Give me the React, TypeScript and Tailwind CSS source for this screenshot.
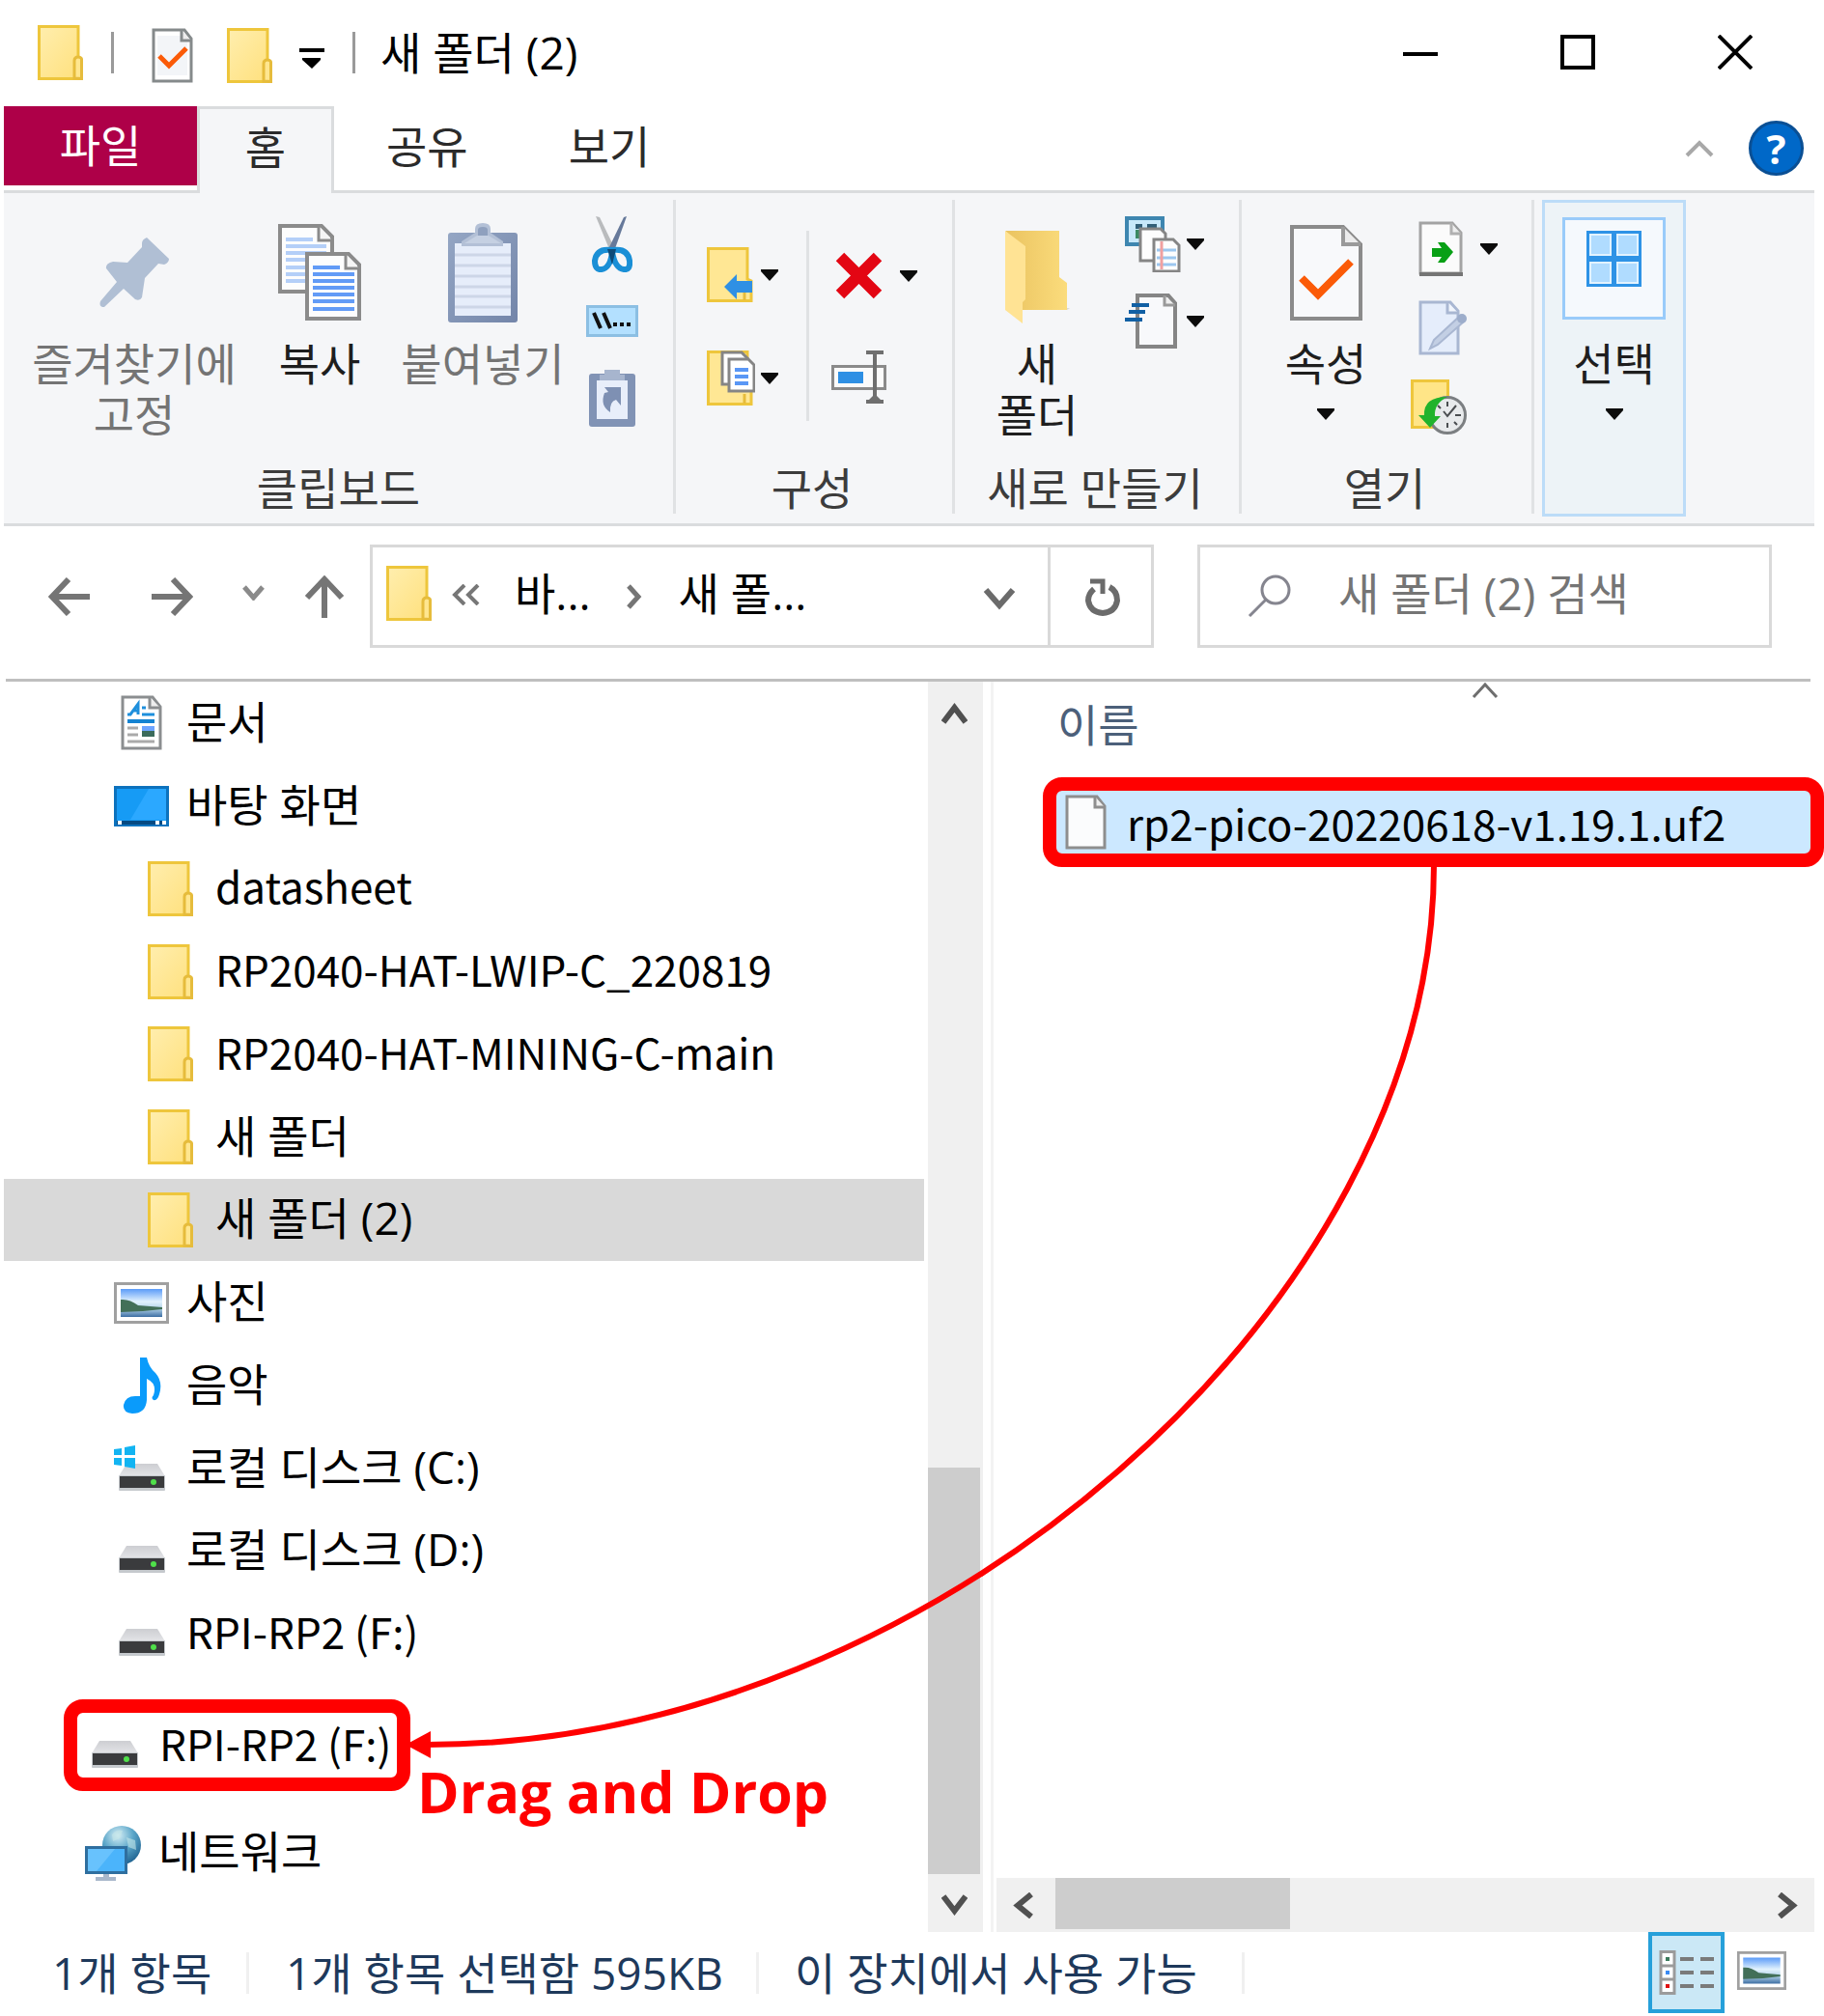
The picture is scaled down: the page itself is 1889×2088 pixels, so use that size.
import React from "react";

type IconProps = { className?: string };

/* ---------- icons ---------- */

const Folder = ({ className = "w-[47px] h-[57px]" }: IconProps) => (
  <svg viewBox="0 0 47 57" className={className} aria-hidden="true">
    <defs>
      <linearGradient id="fold" x1="0" y1="0" x2="1" y2="1">
        <stop offset="0" stopColor="#ffeeae" />
        <stop offset="1" stopColor="#ffe07c" />
      </linearGradient>
    </defs>
    <path d="M1.5 1.5H42V33l3.5 3V55.5H1.5Z" fill="url(#fold)" stroke="#eec63c" strokeWidth="3" />
    <path d="M38 55V37q0-4 4-4t3.5 4V55.5Z" fill="#ffe68f" stroke="#e6bc3c" strokeWidth="3" />
  </svg>
);

const Triangle = () => (
  <svg viewBox="0 0 18 12" className="h-3 w-[18px]" aria-hidden="true">
    <path d="M0 0H18V2L9 12 0 2Z" fill="#0c0c0c" />
  </svg>
);

const CheckDoc = ({ className = "" }: IconProps) => (
  <svg viewBox="0 0 75 99" className={className} aria-hidden="true">
    <path d="M2 2H55L73 20V97H2Z" fill="#f8f9fb" stroke="#8b8b8b" strokeWidth="4" />
    <path d="M55 2V20H73" fill="#ececec" stroke="#9a9a9a" strokeWidth="4" />
    <path d="M12 55 29 72 63 38" fill="none" stroke="#fb5b08" strokeWidth="8" />
  </svg>
);

const CheckDocSmall = () => (
  <svg viewBox="0 0 43 57" className="h-[57px] w-[43px]" aria-hidden="true">
    <path d="M2 2H34L41 11V55H2Z" fill="#fff" stroke="#858a8b" strokeWidth="3" />
    <path d="M6 8H30V15H37V49H6Z" fill="#f3f5f8" />
    <path d="M31 2V13H41" fill="#ececec" stroke="#858a8b" strokeWidth="3" />
    <path d="M8 29 18 39 36 21" fill="none" stroke="#fb5b08" strokeWidth="5" />
  </svg>
);

const Pin = () => (
  <svg viewBox="0 0 72 72" className="size-[72px]" aria-hidden="true">
    <path
      d="M49 0q-5 2-5 6v4L29 26 14 25q-8 2-7 7l11 14L1 66q-2 6 4 6L25 53l12 11q5 2 7-2l3-20L61 27l6 1q5-2 5-6Z"
      fill="#b0bfd4"
    />
  </svg>
);

const CopyPages = () => (
  <svg viewBox="0 0 86 100" className="h-[100px] w-[86px]" aria-hidden="true">
    <path d="M2 2H45L56 13V70H2Z" fill="#fdfdfd" stroke="#8b8b8b" strokeWidth="4" />
    <path d="M42 2V17H56" fill="#f5f5f5" stroke="#8b8b8b" strokeWidth="3" />
    <path d="M8 16H36M8 23H50M8 30H50M8 37H50M8 45H50M8 52H50M8 59H50" stroke="#b4cff8" strokeWidth="4" />
    <path d="M30 31H73L84 42V98H30Z" fill="#fdfdfd" stroke="#8b8b8b" strokeWidth="4" />
    <path d="M70 31V46H84" fill="#f5f5f5" stroke="#8b8b8b" strokeWidth="3" />
    <path d="M36 45H64M36 52H79M36 59H79M36 66H79M36 73H79M36 80H79M36 88H79" stroke="#629bf6" strokeWidth="4" />
  </svg>
);

const Clipboard = () => (
  <svg viewBox="0 0 72 104" className="h-[104px] w-[72px]" aria-hidden="true">
    <defs>
      <linearGradient id="clip" x1="0" y1="0" x2="1" y2="1">
        <stop offset="0" stopColor="#94a6c4" />
        <stop offset="1" stopColor="#7385a9" />
      </linearGradient>
    </defs>
    <rect x="0" y="11" width="72" height="93" rx="3" fill="url(#clip)" />
    <rect x="7" y="22" width="58" height="75" fill="#e6edfa" />
    <path d="M7 34H65M7 45H65M7 56H65M7 67H65M7 77H65M7 88H65" stroke="#cdd6e7" strokeWidth="3" />
    <path d="M28 11V7q0-6 8-6t8 6v4l13 9v5H14v-5Z" fill="#b3c0d6" />
    <path d="M31 14V8q0-3 5-3t5 3v6Z" fill="#8fa0be" />
    <path d="M17 22 30 14H42L55 22Z" fill="#c5d0e2" />
  </svg>
);

const Scissors = () => (
  <svg viewBox="0 0 42 58" className="h-[58px] w-[42px]" aria-hidden="true">
    <path d="M4 0 8 1 24 34l-4 5Z" fill="#b9bbbd" />
    <path d="M36 0 33 1 17 34l5 5Z" fill="#66799a" />
    <path d="M20 35Q5 33 3 46q0 10 7 9 9-1 11-18Q24 54 33 55q7 1 6-9Q37 33 22 35Z" fill="none" stroke="#1a8fd6" strokeWidth="6" />
    <path d="M16 34h9l-4 16Z" fill="#0d4a78" />
  </svg>
);

const CopyPath = () => (
  <svg viewBox="0 0 54 33" className="h-[33px] w-[54px]" aria-hidden="true">
    <rect x="1.5" y="1.5" width="51" height="30" fill="#b3e0ff" stroke="#8cbfe3" strokeWidth="3" />
    <path d="M8 8 15 24M18 8 25 24" stroke="#111" strokeWidth="4" />
    <path d="M28 20h4M35 20h4M42 20h4" stroke="#111" strokeWidth="4" />
  </svg>
);

const PasteShortcut = () => (
  <svg viewBox="0 0 48 59" className="h-[59px] w-[48px]" aria-hidden="true">
    <rect x="0" y="4" width="48" height="55" rx="3" fill="#8193b5" />
    <rect x="8" y="11" width="32" height="40" fill="#e8eefa" />
    <path d="M16 0H32V5H37V11H11V5H16Z" fill="#a7b5ce" />
    <path d="M16 18H33V37L28 31q-7 2-6 13-11-7-6-20l4-1Z" fill="#7e90b3" />
  </svg>
);

const MoveTo = () => (
  <svg viewBox="0 0 50 57" className="h-[57px] w-[50px]" aria-hidden="true">
    <path d="M1.5 1.5H42V33l4 2V55.5H1.5Z" fill="#ffe794" stroke="#eec63c" strokeWidth="3" />
    <path d="M39 45V55" stroke="#e6bc3c" strokeWidth="3" />
    <path d="M18 41 31 28v7H47V47H31v7Z" fill="#2f90e4" />
  </svg>
);

const CopyTo = () => (
  <svg viewBox="0 0 50 57" className="h-[57px] w-[50px]" aria-hidden="true">
    <path d="M1.5 1.5H42V33l4 2V55.5H1.5Z" fill="#ffe794" stroke="#eec63c" strokeWidth="3" />
    <path d="M39 45V55" stroke="#e6bc3c" strokeWidth="3" />
    <path d="M16 2H36L42 8V35H16Z" fill="#fff" stroke="#858585" strokeWidth="3" />
    <path d="M23 9H43L49 15V42H23Z" fill="#fff" stroke="#858585" strokeWidth="3" />
    <path d="M29 20H43M29 27H43M29 34H43" stroke="#5a97f5" strokeWidth="4" />
  </svg>
);

const DeleteX = () => (
  <svg viewBox="0 0 49 49" className="size-[49px]" aria-hidden="true">
    <path d="M5 5 44 44M44 5 5 44" stroke="#e30613" strokeWidth="12" />
  </svg>
);

const Rename = () => (
  <svg viewBox="0 0 57 55" className="h-[55px] w-[57px]" aria-hidden="true">
    <rect x="1.5" y="16.5" width="54" height="23" fill="#fbfbfb" stroke="#8a8a8a" strokeWidth="3" />
    <rect x="7" y="22" width="26" height="12" fill="#2f90e4" />
    <path d="M36 2H54M36 53H54M45 2V53" stroke="#6f6f6f" strokeWidth="4" fill="none" />
    <path d="M38 52 45 45 52 52Z" fill="#6f6f6f" />
  </svg>
);

const BigFolder = () => (
  <svg viewBox="0 0 68 97" className="mt-[10px] h-[97px] w-[68px]" aria-hidden="true">
    <defs>
      <linearGradient id="bigf" x1="0" y1="0" x2="1" y2="0">
        <stop offset="0" stopColor="#eac360" />
        <stop offset="1" stopColor="#fbdc7c" />
      </linearGradient>
    </defs>
    <path d="M1 0H57V48L65 54V82H19V18Z" fill="url(#bigf)" />
    <path d="M1 0 22 16V71L19 74V96L1 82Z" fill="#ffe394" />
    <path d="M65 80h3l-3 2Z" fill="#d8d8d8" />
  </svg>
);

const NewItem = () => (
  <svg viewBox="0 0 58 58" className="size-[58px]" aria-hidden="true">
    <rect x="2" y="2" width="37" height="27" fill="#c7e8fa" stroke="#3e86b0" strokeWidth="4" />
    <path d="M11 8h7v5h-7zM23 8h10v4H23z" fill="#315f78" />
    <path d="M11 14h5v9h-5z" fill="#3c8a63" />
    <path d="M16 13H37L42 18V46H16Z" fill="#fdfdfd" stroke="#858585" strokeWidth="3" />
    <path d="M30 24H50L56 30V57H30Z" fill="#fdfdfd" stroke="#858585" strokeWidth="3" />
    <path d="M33 35H53M33 43H53M33 50H53" stroke="#9cc7ef" strokeWidth="3" />
    <path d="M38 26V55" stroke="#f0a0a0" strokeWidth="3" />
  </svg>
);

const EasyAccess = () => (
  <svg viewBox="0 0 58 57" className="h-[57px] w-[58px]" aria-hidden="true">
    <path d="M13 2H45L52 10V55H13Z" fill="#f8f9fb" stroke="#858585" strokeWidth="4" />
    <path d="M41 2V12H52" fill="#eee" stroke="#999" strokeWidth="3" />
    <path d="M7 12H25M4 19H21M0 27H18" stroke="#1160a4" strokeWidth="4" />
  </svg>
);

const OpenDoc = () => (
  <svg viewBox="0 0 46 57" className="h-[57px] w-[46px]" aria-hidden="true">
    <path d="M2 2H35L44 12V54H2Z" fill="#fbfbfb" stroke="#a3a3a3" strokeWidth="3" />
    <path d="M1 55H46" stroke="#757575" strokeWidth="4" />
    <path d="M34 2V13H44" fill="#eee" stroke="#b0b0b0" strokeWidth="3" />
    <path d="M14 28H24L20 22H27L36 32 27 43H20L24 37H14Z" fill="#08a015" />
  </svg>
);

const EditDoc = () => (
  <svg viewBox="0 0 50 57" className="h-[57px] w-[50px]" aria-hidden="true">
    <path d="M2 2H33L41 11V55H2Z" fill="#e5edfb" stroke="#a9b7d2" strokeWidth="3" />
    <path d="M30 2V13H41" fill="#f1f5fc" stroke="#a9b7d2" strokeWidth="3" />
    <path d="M12 50 16 41 41 18 46 23 20 46Z" fill="#c3cfe4" stroke="#a9b7d2" strokeWidth="2" />
    <circle cx="45" cy="19" r="5" fill="#9dadcb" />
  </svg>
);

const History = () => (
  <svg viewBox="0 0 58 57" className="h-[57px] w-[58px]" aria-hidden="true">
    <rect x="1.5" y="1.5" width="37" height="48" fill="#ffe587" stroke="#eec63c" strokeWidth="3" />
    <circle cx="38" cy="37" r="18.5" fill="#e8eaec" stroke="#7c7f82" strokeWidth="3" />
    <path d="M38 23V28M38 45V50M46 37H52M28 27 31 30M45 44 48 47M47 27 38 38 34 33" stroke="#4a4d50" strokeWidth="2" fill="none" />
    <path d="M38 18Q13 18 14 37H8L20 50 31 38H25Q24 25 38 18Z" fill="#21b32c" />
  </svg>
);

const SelectGrid = () => (
  <svg viewBox="0 0 57 58" className="h-[58px] w-[57px]" aria-hidden="true">
    <rect width="57" height="58" fill="#2e93e6" />
    <path d="M4 4H25V25H4ZM32 4H53V25H32ZM4 33H25V54H4ZM32 33H53V54H32Z" fill="#b0dcff" stroke="#e2f3ff" strokeWidth="2" />
  </svg>
);

const DocumentIcon = () => (
  <svg viewBox="0 0 43 57" className="h-[57px] w-[43px]" aria-hidden="true">
    <path d="M2 2H33L41 12V55H2Z" fill="#fff" stroke="#8b8e90" strokeWidth="3" />
    <path d="M30 2V13H41" fill="#eee" stroke="#8b8e90" strokeWidth="3" />
    <path d="M7 20H10L18 9V20M12 16H18M22 13H26M22 20H35" stroke="#1e8fdc" strokeWidth="3" fill="none" />
    <path d="M7 27H35" stroke="#1583d2" strokeWidth="4" />
    <path d="M7 34H18M7 41H18M7 48H35" stroke="#aaa" strokeWidth="3" />
    <path d="M22 32H35V37H22Z" fill="#6ea4ff" />
    <path d="M22 37H35V43H22Z" fill="#3b6b5b" />
  </svg>
);

const DesktopIcon = () => (
  <svg viewBox="0 0 57 42" className="h-[42px] w-[57px]" aria-hidden="true">
    <rect x="1.5" y="1.5" width="54" height="39" fill="#169bf5" stroke="#0c72bd" strokeWidth="3" />
    <path d="M36 3H54V35H17Z" fill="#2ba8ff" />
    <path d="M3 38H54" stroke="#064a82" strokeWidth="4" />
    <path d="M4 38h4M43 38h4M50 38h4" stroke="#fff" strokeWidth="4" />
  </svg>
);

const PictureIcon = ({ className = "w-[57px] h-[43px]" }: IconProps) => (
  <svg viewBox="0 0 57 43" preserveAspectRatio="none" className={className} aria-hidden="true">
    <defs>
      <linearGradient id="sky" x1="0" y1="0" x2="0" y2="1">
        <stop offset="0" stopColor="#5b9bf8" />
        <stop offset=".45" stopColor="#e2f2fd" />
        <stop offset=".7" stopColor="#b3d3e9" />
        <stop offset="1" stopColor="#3d6ea3" />
      </linearGradient>
    </defs>
    <rect x="1.5" y="1.5" width="54" height="40" fill="#fff" stroke="#a0a0a0" strokeWidth="3" />
    <rect x="7" y="7" width="43" height="29" fill="url(#sky)" />
    <path d="M7 18Q16 17 25 24L50 26V28L30 30 7 31Z" fill="#426f58" />
  </svg>
);

const MusicIcon = () => (
  <svg viewBox="0 0 40 58" className="h-[58px] w-[40px]" aria-hidden="true">
    <path
      d="M18 0H25Q27 10 34 16 42 25 38 38 36 45 32 44 29 42 32 39 36 27 25 22V44Q24 58 10 58 0 57 1 49 3 40 13 40H18Z"
      fill="#0a9bfb"
    />
  </svg>
);

const Drive = ({ windows = false }: { windows?: boolean }) => (
  <svg viewBox="0 0 57 48" className="h-[48px] w-[57px] shrink-0" aria-hidden="true">
    <defs>
      <linearGradient id="drv" x1="0" y1="0" x2="0" y2="1">
        <stop offset="0" stopColor="#cdced2" />
        <stop offset="1" stopColor="#e3e4e7" />
      </linearGradient>
    </defs>
    <path d="M13 19H45L53 32H5Z" fill="url(#drv)" />
    <rect x="5" y="31" width="48" height="16" rx="1" fill="#c5c9cd" />
    <rect x="6" y="32" width="46" height="12" fill="#3a3b3d" />
    <circle cx="41" cy="38" r="3" fill="#4fe04a" />
    {windows && (
      <path d="M0 4 8 3V10H0ZM11 2 22 0V10H11ZM0 13H8V21L0 20ZM11 13H22V24L11 22Z" fill="#12b4f2" />
    )}
  </svg>
);

const NetworkIcon = () => (
  <svg viewBox="0 0 58 57" className="h-[57px] w-[58px]" aria-hidden="true">
    <defs>
      <radialGradient id="globe" cx=".4" cy=".25" r=".8">
        <stop offset="0" stopColor="#d5eef5" />
        <stop offset=".5" stopColor="#5ba6c9" />
        <stop offset="1" stopColor="#1c5f8e" />
      </radialGradient>
    </defs>
    <circle cx="38" cy="20" r="20" fill="url(#globe)" />
    <path d="M28 9Q33 3 39 5L36 13 29 16ZM43 12 52 15 53 25 45 22Z" fill="#c4e6e8" opacity=".6" />
    <rect x="1.5" y="22.5" width="41" height="26" fill="#4bb4fb" stroke="#2f6f9f" strokeWidth="3" />
    <path d="M3 24H31L12 47H3Z" fill="#7cccff" opacity=".6" />
    <path d="M19 50H25V53H32V57H11V53H19Z" fill="#a9b8cb" />
  </svg>
);

const FileIcon = () => (
  <svg viewBox="0 0 43 57" className="h-[57px] w-[43px]" aria-hidden="true">
    <path d="M2 2H33L41 12V55H2Z" fill="#fbfcfd" stroke="#8e8e8e" strokeWidth="3" />
    <path d="M31 2V13H41" fill="#eee" stroke="#8e8e8e" strokeWidth="3" />
  </svg>
);

const Chevron = ({ d, className, color = "#505050", width = 6, box }: { d: string; className: string; color?: string; width?: number; box: string }) => (
  <svg viewBox={box} className={className} aria-hidden="true">
    <path d={d} fill="none" stroke={color} strokeWidth={width} />
  </svg>
);

/* ---------- ribbon ---------- */

const Group = ({ label, className, children }: { label: string; className: string; children: React.ReactNode }) => (
  <section className={"flex h-[325px] shrink-0 flex-col justify-between border-r-[3px] border-[#e0e2e4] " + className}>
    <div className="flex">{children}</div>
    <h2 className="text-center leading-[53px] text-[#3c3c3c]">{label}</h2>
  </section>
);

const BigButton = ({ icon, text, className = "", arrow }: { icon: React.ReactNode; text: string; className?: string; arrow?: boolean }) => (
  <button type="button" className={"flex flex-col items-center pt-[23px] " + className}>
    <span className="mb-[16px] flex h-[104px] items-center">{icon}</span>
    <span className="whitespace-pre text-center leading-[53px]">{text}</span>
    {arrow && (
      <span className="mt-[20px]">
        <Triangle />
      </span>
    )}
  </button>
);

const SmallButton = ({ icon, label, arrow }: { icon: React.ReactNode; label: string; arrow?: boolean }) => (
  <button type="button" aria-label={label} className="flex items-center gap-[6px]">
    {icon}
    {arrow && <Triangle />}
  </button>
);

const Ribbon = () => (
  <div className="mr-[10px] ml-1 flex border-b-[3px] border-[#dadcde] bg-[#f5f6f8] py-[7px] text-[#1e1e1e]">
    <Group label="클립보드" className="w-[696px]">
      <BigButton icon={<Pin />} text={"즐겨찾기에\n고정"} className="ml-[24px] w-[222px] text-[#747474]" />
      <BigButton icon={<CopyPages />} text="복사" className="ml-[34px] w-[94px]" />
      <BigButton icon={<Clipboard />} text="붙여넣기" className="ml-[32px] w-[180px] text-[#747474]" />
      <div className="ml-[15px] flex w-[58px] flex-col items-center gap-[34px] pt-[17px]">
        <SmallButton icon={<Scissors />} label="잘라내기" />
        <SmallButton icon={<CopyPath />} label="경로 복사" />
        <SmallButton icon={<PasteShortcut />} label="바로 가기 붙여넣기" />
      </div>
    </Group>
    <Group label="구성" className="w-[289px] pr-1">
      <div className="mt-[32px] flex h-[197px] w-[138px] flex-col gap-[50px] border-r-[3px] border-[#e0e2e4] pt-[17px] pl-[32px]">
        <SmallButton icon={<MoveTo />} label="이동 위치" arrow />
        <SmallButton icon={<CopyTo />} label="복사 위치" arrow />
      </div>
      <div className="flex flex-col gap-[53px] pt-[54px] pl-[23px]">
        <button type="button" aria-label="삭제" className="flex items-center gap-[18px] pl-[4px]">
          <DeleteX />
          <Triangle />
        </button>
        <SmallButton icon={<Rename />} label="이름 바꾸기" />
      </div>
    </Group>
    <Group label="새로 만들기" className="w-[297px] pr-1">
      <BigButton icon={<BigFolder />} text={"새\n폴더"} className="ml-[38px] w-[94px]" />
      <div className="ml-[44px] flex flex-col gap-[22px] pt-[17px]">
        <SmallButton icon={<NewItem />} label="새 항목" arrow />
        <SmallButton icon={<EasyAccess />} label="빠른 연결" arrow />
      </div>
    </Group>
    <Group label="열기" className="w-[303px] pr-1">
      <BigButton icon={<CheckDoc className="h-[99px] w-[75px]" />} text="속성" arrow className="ml-[40px] w-[94px]" />
      <div className="ml-[41px] flex flex-col gap-[25px] pt-[22px] pl-[8px]">
        <button type="button" aria-label="열기" className="flex items-center gap-[18px]">
          <OpenDoc />
          <Triangle />
        </button>
        <SmallButton icon={<EditDoc />} label="편집" />
        <span className="-ml-2">
          <SmallButton icon={<History />} label="히스토리" />
        </span>
      </div>
    </Group>
    <button
      type="button"
      className="ml-[8px] flex h-[328px] w-[149px] flex-col items-center border-[3px] border-[#bcdcf8] bg-[#edf3f7] pt-[15px]"
    >
      <span className="flex h-[106px] w-[107px] justify-center border-[3px] border-[#99cbfa] bg-[#f5f9fd] pt-[11px]">
        <SelectGrid />
      </span>
      <span className="mt-[19px] leading-[53px]">선택</span>
      <span className="mt-[20px]">
        <Triangle />
      </span>
    </button>
  </div>
);

/* ---------- folder tree ---------- */

const tree: { label: string; icon: React.ReactNode; deep?: boolean; selected?: boolean; latin?: boolean }[] = [
  { label: "문서", icon: <DocumentIcon /> },
  { label: "바탕 화면", icon: <DesktopIcon /> },
  { label: "datasheet", icon: <Folder />, deep: true, latin: true },
  { label: "RP2040-HAT-LWIP-C_220819", icon: <Folder />, deep: true, latin: true },
  { label: "RP2040-HAT-MINING-C-main", icon: <Folder />, deep: true, latin: true },
  { label: "새 폴더", icon: <Folder />, deep: true },
  { label: "새 폴더 (2)", icon: <Folder />, deep: true, selected: true },
  { label: "사진", icon: <PictureIcon /> },
  { label: "음악", icon: <MusicIcon /> },
  { label: "로컬 디스크 (C:)", icon: <Drive windows /> },
  { label: "로컬 디스크 (D:)", icon: <Drive /> },
  { label: "RPI-RP2 (F:)", icon: <Drive />, latin: true },
];

const latinText = "pb-[6px] font-['Noto_Sans_CJK_KR',sans-serif] text-[44px]";

const Tree = () => (
  <nav className="w-[953px] shrink-0 text-black" aria-label="탐색 창">
    <ul className="grid h-[1029px] auto-rows-fr">
      {tree.map((n) => (
        <li key={n.label} className={n.selected ? "bg-[#d9d9d9]" : ""}>
          <button type="button" className={"flex size-full items-center gap-[18px] " + (n.deep ? "pl-[144px]" : "pl-[114px]")}>
            <span className="flex w-[57px] shrink-0 justify-center">{n.icon}</span>
            <span className={"whitespace-nowrap leading-[60px] " + (n.latin ? latinText : "pb-[4px]")}>{n.label}</span>
          </button>
        </li>
      ))}
    </ul>
    <button
      type="button"
      className="mt-[25px] ml-[62px] flex h-[95px] w-[359px] items-center gap-[18px] rounded-[20px] border-[14px] border-[#ff0000] pl-[10px]"
    >
      <Drive />
      <span className={"whitespace-nowrap leading-[60px] " + latinText}>RPI-RP2 (F:)</span>
    </button>
    <button type="button" className="mt-[20px] ml-[84px] flex h-[88px] items-center gap-[18px]">
      <NetworkIcon />
      <span className="pb-[4px] leading-[60px]">네트워크</span>
    </button>
  </nav>
);

/* ---------- window ---------- */

const Divider = () => <span className="h-[43px] w-[3px] shrink-0 bg-[#9a9a9a]" />;

export default function App() {
  return (
    <div className="w-full overflow-hidden bg-white font-['Open_Sans','Noto_Sans_CJK_KR',sans-serif] text-[46px] leading-[60px] text-black">
      <header className="flex h-[110px] items-center pb-[2px] pl-[39px]">
        <Folder />
        <span className="ml-[29px] flex">
          <Divider />
        </span>
        <button type="button" aria-label="속성" className="ml-[39px] pt-[6px]">
          <CheckDocSmall />
        </button>
        <button type="button" aria-label="새 폴더" className="ml-[35px] pt-[6px]">
          <Folder />
        </button>
        <button type="button" aria-label="빠른 실행 도구 모음 사용자 지정" className="mr-[29px] ml-[28px] pt-[12px]">
          <svg viewBox="0 0 26 21" className="h-[21px] w-[26px]" aria-hidden="true">
            <path d="M0 0H26V4H0ZM3 10H22V12L13 21 3 12Z" fill="#000" />
          </svg>
        </button>
        <Divider />
        <h1 className="ml-[26px] whitespace-nowrap">새 폴더 (2)</h1>
        <div className="mr-[74px] ml-auto flex items-center gap-[127px]">
          <button type="button" aria-label="최소화">
            <svg viewBox="0 0 36 36" className="size-9" aria-hidden="true">
              <path d="M0 20H36" stroke="#000" strokeWidth="4" />
            </svg>
          </button>
          <button type="button" aria-label="최대화">
            <svg viewBox="0 0 36 36" className="size-9" aria-hidden="true">
              <rect x="2" y="2" width="32" height="32" fill="none" stroke="#000" strokeWidth="4" />
            </svg>
          </button>
          <button type="button" aria-label="닫기">
            <svg viewBox="0 0 36 36" className="size-9" aria-hidden="true">
              <path d="M1 1 35 35M35 1 1 35" stroke="#000" strokeWidth="4" />
            </svg>
          </button>
        </div>
      </header>

      <div className="mr-[10px] ml-1 flex h-[90px] text-[#2b2b2b]">
        <div className="w-[200px] border-b-[3px] border-[#dadcde]">
          <button type="button" className="h-[82px] w-full bg-[#ae0048] pb-[2px] text-white">
            파일
          </button>
        </div>
        <button type="button" className="w-[142px] border-x-[3px] border-t-[3px] border-[#dadcde] bg-[#f5f6f8] pb-[10px]">
          홈
        </button>
        <div className="flex flex-1 items-center border-b-[3px] border-[#dadcde] pl-[54px]">
          <button type="button" className="pb-[6px]">
            공유
          </button>
          <button type="button" className="ml-[104px] pb-[6px]">
            보기
          </button>
          <button type="button" aria-label="리본 최소화" className="mr-[36px] ml-auto">
            <Chevron box="0 0 30 18" d="M2 16 15 3 28 16" color="#a8a8a8" width={4} className="h-[18px] w-[30px]" />
          </button>
          <button
            type="button"
            aria-label="도움말"
            className="mr-[11px] flex size-[57px] items-center justify-center rounded-full border-[3px] border-[#0a4f94] bg-[#0068c8] text-[42px] font-bold leading-none text-white"
          >
            ?
          </button>
        </div>
      </div>

      <Ribbon />

      <div className="mr-[14px] ml-[6px] flex items-center border-b-[3px] border-[#bfbfbf] pt-[19px] pr-[40px] pb-[32px] pl-[44px]">
        <button type="button" aria-label="뒤로">
          <Chevron box="0 0 43 40" d="M43 20H4M21 2 4 20 21 38" color="#757575" className="h-[40px] w-[43px]" />
        </button>
        <button type="button" aria-label="앞으로" className="ml-[64px]">
          <Chevron box="0 0 43 40" d="M0 20H39M22 2 39 20 22 38" color="#757575" className="h-[40px] w-[43px]" />
        </button>
        <button type="button" aria-label="최근 위치" className="mb-[8px] ml-[51px]">
          <Chevron box="0 0 23 16" d="M2 2 11.500 13 21 2" color="#8a8a8a" width={5} className="h-[16px] w-[23px]" />
        </button>
        <button type="button" aria-label="위로" className="ml-[41px]">
          <Chevron box="0 0 42 44" d="M21 44V4M3 23 21 4 39 23" color="#757575" className="h-[44px] w-[42px]" />
        </button>
        <div className="ml-[26px] flex h-[107px] w-[812px] shrink-0 items-center border-[3px] border-[#d9d9d9] pl-[14px]">
          <Folder className="mb-[6px] h-[57px] w-[47px]" />
          <Chevron box="0 0 29 22" d="M13 1 3 11 13 21M27 1 17 11 27 21" color="#777" width={4} className="mb-[4px] ml-[21px] h-[22px] w-[29px]" />
          <button type="button" className="ml-[36px] pb-[8px]">
            바...
          </button>
          <Chevron box="0 0 17 26" d="M3 2 13 13 3 24" color="#757575" width={5} className="ml-[36px] h-[26px] w-[17px]" />
          <button type="button" className="ml-[38px] whitespace-nowrap pb-[8px]">
            새 폴...
          </button>
          <button type="button" aria-label="이전 위치" className="mr-[33px] ml-auto pt-[4px]">
            <Chevron box="0 0 34 24" d="M3 3 17 19 31 3" color="#6b6b6b" className="h-[24px] w-[34px]" />
          </button>
          <button type="button" aria-label="새로 고침" className="flex h-full w-[107px] items-center justify-center border-l-[3px] border-[#d9d9d9] pl-[4px]">
            <svg viewBox="0 0 36 40" className="h-[40px] w-[36px]" aria-hidden="true">
              <path d="M9 12Q3 17 3 24 5 36 18 37 31 36 33 24 33 14 25 10" fill="none" stroke="#6b6b6b" strokeWidth="6" />
              <path d="M5 4H18V17" fill="none" stroke="#6b6b6b" strokeWidth="5" />
            </svg>
          </button>
        </div>
        <label className="ml-[45px] flex h-[107px] min-w-0 flex-1 items-center border-[3px] border-[#d9d9d9] pb-[2px] pl-[49px]">
          <svg viewBox="0 0 45 44" className="h-[44px] w-[45px] shrink-0" aria-hidden="true">
            <circle cx="29" cy="16" r="14" fill="none" stroke="#85858f" strokeWidth="3" />
            <path d="M19 26 2 43" stroke="#85858f" strokeWidth="3" />
          </svg>
          <input
            type="text"
            aria-label="새 폴더 (2) 검색"
            placeholder="새 폴더 (2) 검색"
            className="ml-[49px] h-[74px] w-full min-w-0 bg-transparent pb-[6px] outline-none placeholder:text-[#757575]"
          />
        </label>
      </div>

      <main className="relative flex h-[1295px] pl-1">
        <Tree />
        <div className="ml-[4px] flex w-[57px] shrink-0 flex-col items-center bg-[#f0f0f0] pr-[3px]" aria-hidden="true">
          <Chevron box="0 0 27 22" d="M2 20 13.500 5 25 20" className="mt-[22px] h-[22px] w-[27px]" />
          <div className="mt-auto h-[421px] w-[54px] bg-[#cdcdcd]" />
          <Chevron box="0 0 27 22" d="M2 2 13.500 17 25 2" className="mt-[21px] mb-[17px] h-[22px] w-[27px]" />
        </div>
        <div className="ml-[8px] w-[3px] bg-[#f3f3f3]" />
        <section className="flex min-w-0 flex-1 flex-col">
          <div className="flex h-[99px] items-start justify-between pl-[66px]">
            <button type="button" className="mt-[14px] text-[#4c607a]">
              이름
            </button>
            <Chevron box="0 0 28 18" d="M2 16 14 3 26 16" color="#6e6e6e" width={3} className="mr-[337px] h-[18px] w-[28px]" />
          </div>
          <button
            type="button"
            className="ml-[51px] flex h-[93px] items-center gap-[21px] rounded-[20px] border-[14px] border-[#ff0000] bg-[#cce8ff] pl-[9px]"
          >
            <FileIcon />
            <span className="whitespace-nowrap font-['Noto_Sans_CJK_KR',sans-serif] text-[44px]">rp2-pico-20220618-v1.19.1.uf2</span>
          </button>
          <div className="mt-auto mr-[10px] ml-[3px] flex h-[56px] items-center bg-[#f0f0f0]" aria-hidden="true">
            <Chevron box="0 0 22 27" d="M19 2 5 13.500 19 25" className="ml-[17px] h-[27px] w-[22px]" />
            <div className="mb-[3px] ml-[22px] h-[53px] w-[243px] bg-[#cdcdcd]" />
            <Chevron box="0 0 22 27" d="M3 2 17 13.500 3 25" className="mr-[17px] ml-auto h-[27px] w-[22px]" />
          </div>
        </section>

        <svg viewBox="0 0 1889 1295" className="pointer-events-none absolute top-0 left-0 h-[1295px] w-[1889px]" aria-hidden="true">
          <path d="M1485 190C1485 646 964 1101 442 1101" fill="none" stroke="#f00" strokeWidth="6" />
          <path d="M420 1101 446 1087V1115Z" fill="#f00" />
        </svg>
        <strong className="absolute top-[1109px] left-[432px] whitespace-nowrap text-[59px] leading-[80px] text-[#ff0000]">
          Drag and Drop
        </strong>
      </main>

      <footer className="flex h-[87px] items-center pb-[3px] pl-[54px] text-[#1e395b]">
        <span className="w-[204px] whitespace-nowrap border-r-[3px] border-[#f0f0f0] leading-[43px]">1개 항목</span>
        <span className="w-[528px] whitespace-nowrap border-r-[3px] border-[#f0f0f0] pl-[38px] leading-[43px]">1개 항목 선택함 595KB</span>
        <span className="w-[503px] whitespace-nowrap border-r-[3px] border-[#f0f0f0] pl-[37px] leading-[43px]">이 장치에서 사용 가능</span>
        <button
          type="button"
          aria-label="자세히"
          className="ml-auto flex h-[84px] w-[79px] items-center justify-center border-[4px] border-[#26a0da] bg-[#cbe8f6]"
        >
          <svg viewBox="0 0 58 46" className="h-[46px] w-[58px]" aria-hidden="true">
            <path d="M2 1.500H16V44.500H2ZM2 16H16M2 30H16" fill="#fff" stroke="#9b9b9b" strokeWidth="3" />
            <path d="M7 9h4" stroke="#3b7a5c" strokeWidth="4" />
            <path d="M7 23h4" stroke="#3b8bf5" strokeWidth="4" />
            <path d="M7 37h4" stroke="#e01010" strokeWidth="4" />
            <path d="M22 9H36M43 9H57M22 23H36M43 23H57M22 37H36M43 37H57" stroke="#7a7a7a" strokeWidth="4" />
          </svg>
        </button>
        <button type="button" aria-label="큰 아이콘" className="mr-[39px] mb-[4px] ml-[13px]">
          <PictureIcon className="h-[40px] w-[51px]" />
        </button>
      </footer>
    </div>
  );
}
